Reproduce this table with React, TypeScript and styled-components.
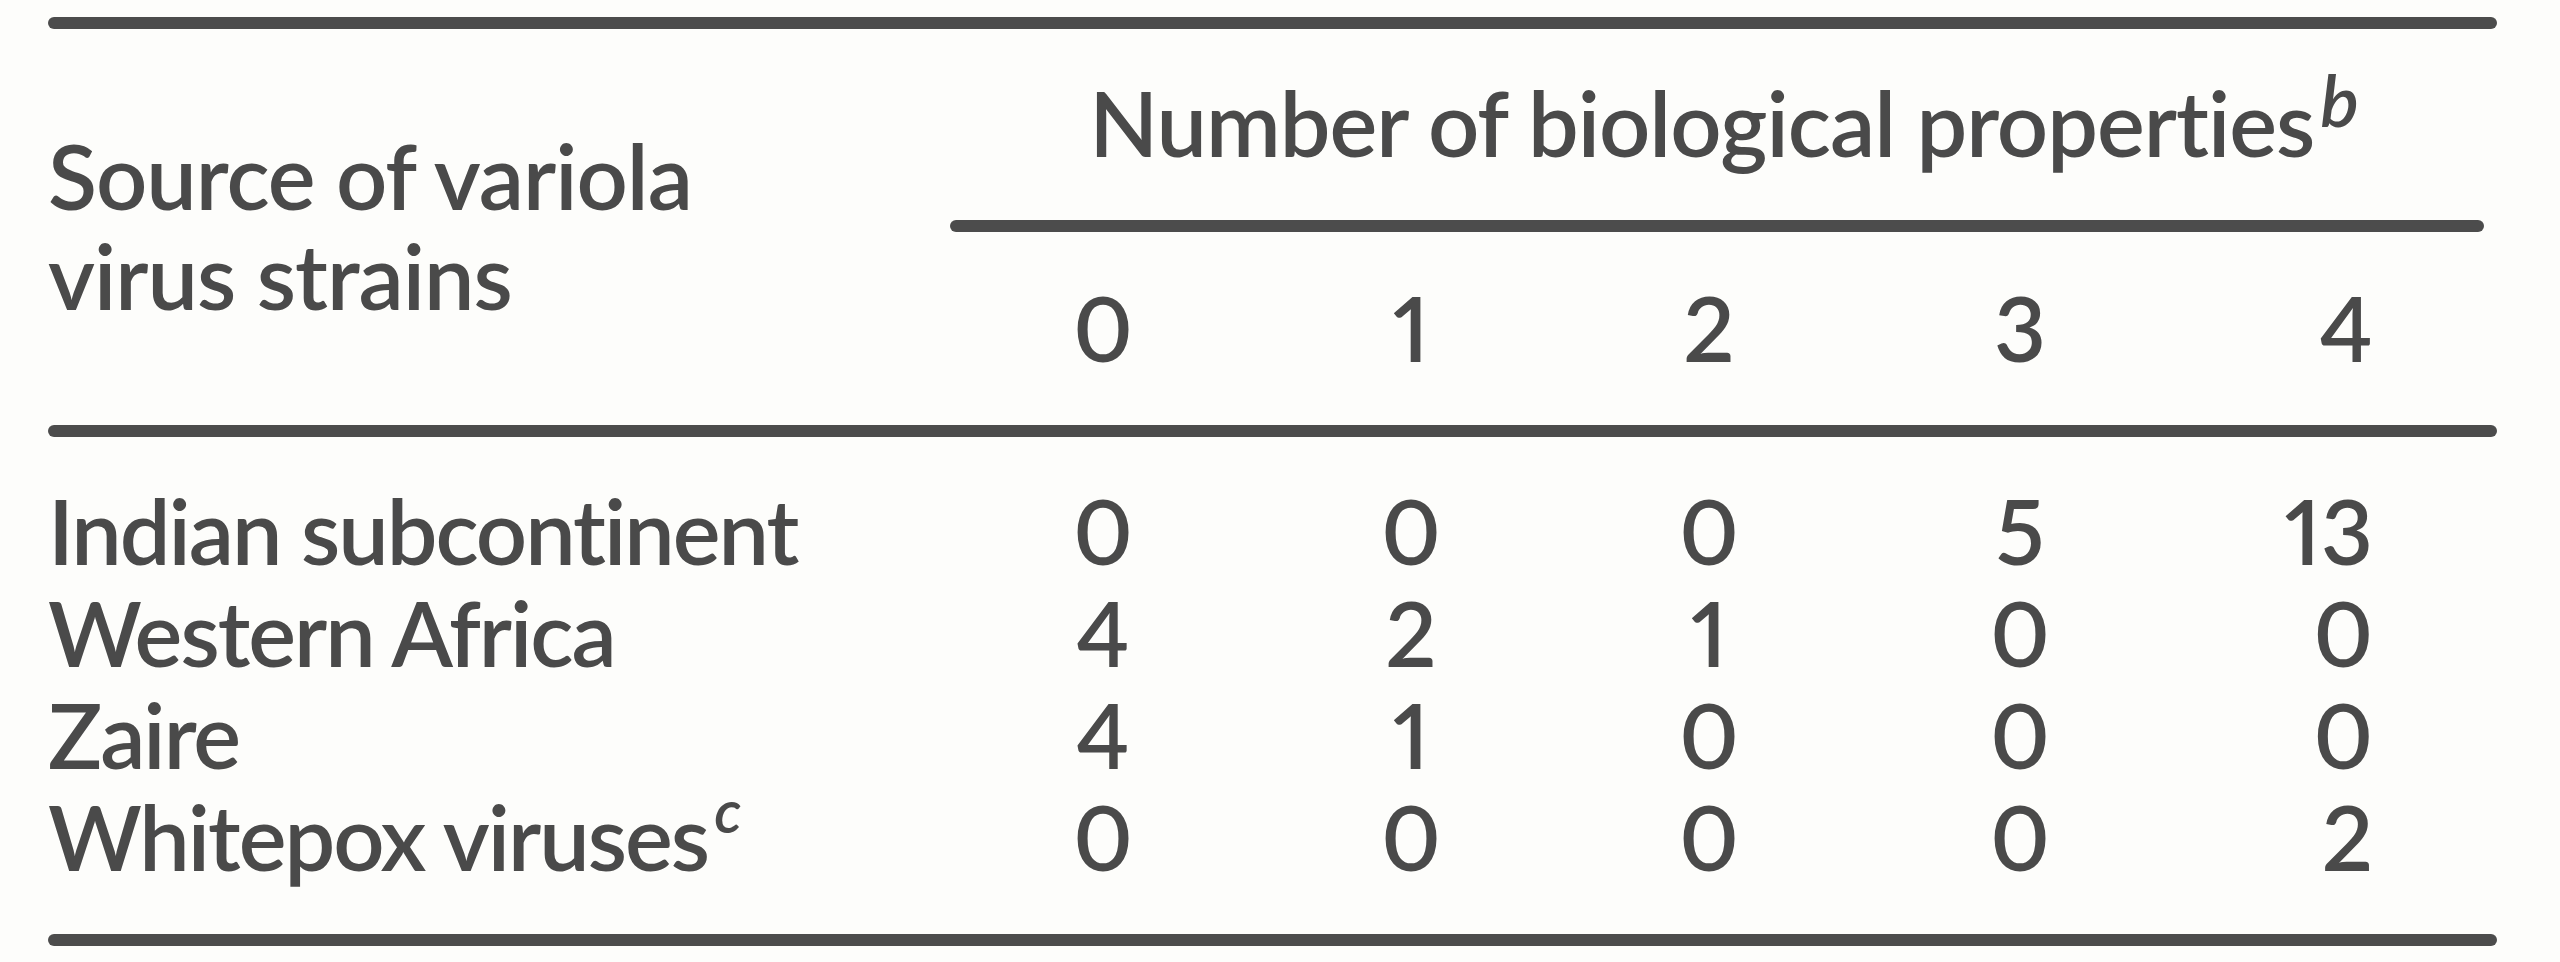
import React from 'react';
import styled, {createGlobalStyle} from 'styled-components';

const GlobalStyle = createGlobalStyle`
  body {
    margin: 0;
    background: #fdfdfb;
    font-family: Lato, "Open Sans", sans-serif;
    color: #4a4a4a;
  }
`;

const rows = [
  {source: 'Indian subcontinent', values: [0, 0, 0, 5, 13]},
  {source: 'Western Africa', values: [4, 2, 1, 0, 0]},
  {source: 'Zaire', values: [4, 1, 0, 0, 0]},
  {source: 'Whitepox viruses', note: 'c', values: [0, 0, 0, 0, 2]},
];

function App() {
  return (
    <React.Fragment>
      <GlobalStyle />
      <TableWrapper>
        <Rule />
        <HeadGrid>
          <StubHead>
            Source of variola
            <br />
            virus strains
          </StubHead>
          <Spanner>
            Number of biological properties<Note $raise={30}>b</Note>
          </Spanner>
          <SpannerRule />
          {[0, 1, 2, 3, 4].map((n, i) => (
            <NumCell key={n} $last={i === 4}>{n}</NumCell>
          ))}
        </HeadGrid>
        <Rule />
        <BodyGrid>
          {rows.map((row) => (
            <React.Fragment key={row.source}>
              <SourceCell>
                {row.source}
                {row.note && <Note $raise={38} $small>{row.note}</Note>}
              </SourceCell>
              {row.values.map((v, i) => (
                <NumCell key={i} $last={i === 4}>{v}</NumCell>
              ))}
            </React.Fragment>
          ))}
        </BodyGrid>
        <Rule />
      </TableWrapper>
    </React.Fragment>
  );
}

const TableWrapper = styled.div`
  width: 2449px;
  padding: 17px 0 0 48px;
`;

const Rule = styled.div`
  height: 12px;
  background: #4c4c4c;
  border-radius: 6px;
`;

const HeadGrid = styled.div`
  display: grid;
  grid-template-columns: 902px 306px 310px 286px 336px 309px;
  padding-bottom: 47px;
`;

const StubHead = styled.div`
  grid-column: 1;
  grid-row: 1 / 4;
  padding-top: 96px;
  font-size: 90px;
  line-height: 100px;
  font-weight: 600;
  letter-spacing: -1px;
`;

const Spanner = styled.div`
  grid-column: 2 / -1;
  grid-row: 1;
  margin-top: 42px;
  text-align: center;
  font-size: 90px;
  line-height: 102px;
  font-weight: 600;
  letter-spacing: -1px;
`;

const SpannerRule = styled(Rule)`
  grid-column: 2 / -1;
  grid-row: 2;
  margin: 47px 13px 44px 0;
`;

const Note = styled.span<{ $raise: number; $small?: boolean }>`
  font-size: ${(p) => (p.$small ? '60px' : '72px')};
  font-style: italic;
  font-weight: 600;
  line-height: 0;
  margin-left: 6px;
  vertical-align: ${(p) => p.$raise}px;
`;

const BodyGrid = styled.div`
  display: grid;
  grid-template-columns: 902px 306px 310px 286px 336px 309px;
  padding: 42px 0 47px;
`;

const SourceCell = styled.div`
  font-size: 90px;
  line-height: 102px;
  font-weight: 600;
  letter-spacing: -2px;
  white-space: nowrap;
`;

const NumCell = styled.div<{ $last?: boolean }>`
  font-size: 90px;
  line-height: 102px;
  font-weight: 600;
  font-variant-numeric: proportional-nums;
  text-align: ${(p) => (p.$last ? 'right' : 'center')};
  padding-right: ${(p) => (p.$last ? '124px' : '0')};
`;

export default App;
